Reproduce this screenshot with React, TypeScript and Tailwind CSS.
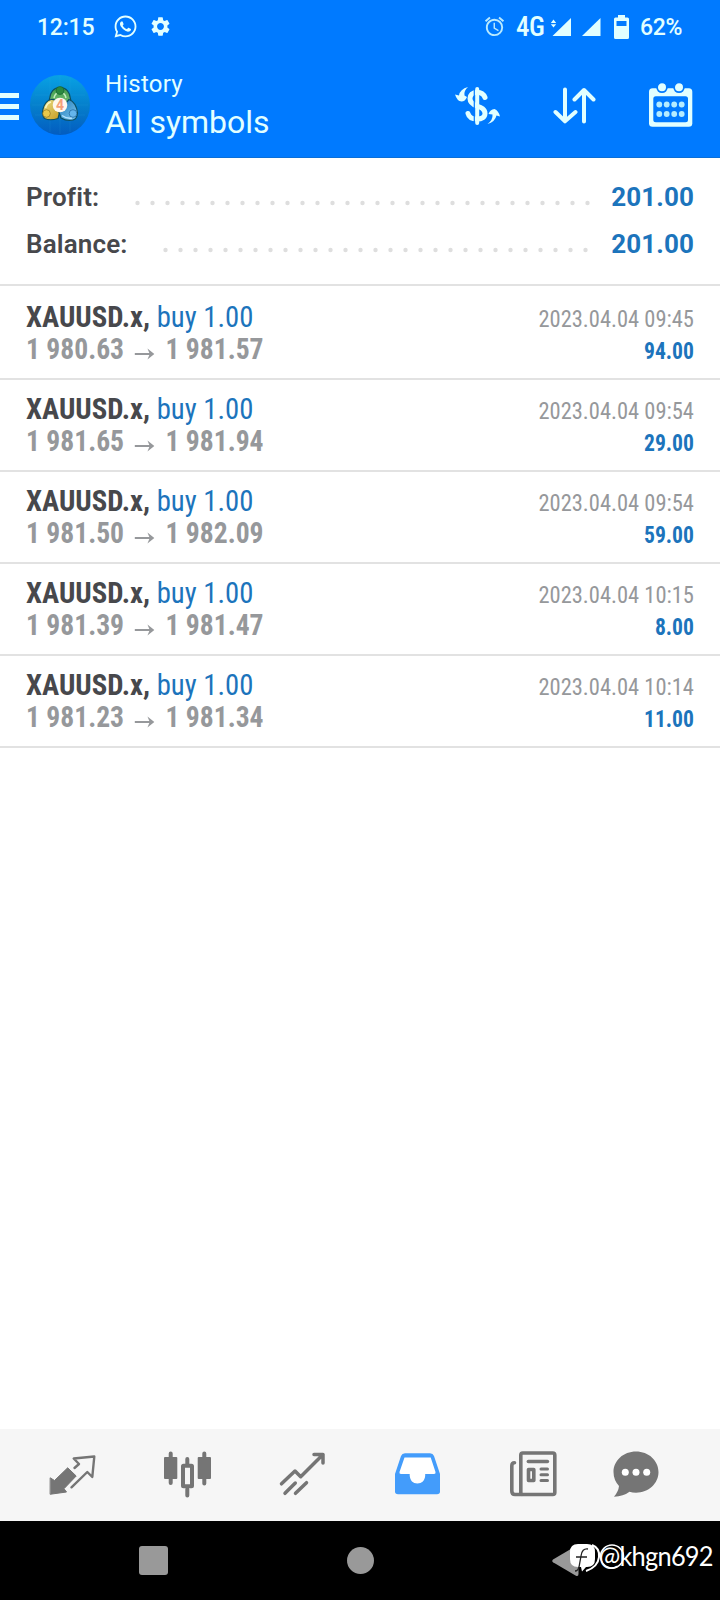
import type { ReactNode } from "react";
import { FaWhatsapp } from "react-icons/fa";
import { MdSettings, MdAlarm } from "react-icons/md";

const deals = [
  { open: "1 980.63", close: "1 981.57", time: "2023.04.04 09:45", profit: "94.00" },
  { open: "1 981.65", close: "1 981.94", time: "2023.04.04 09:54", profit: "29.00" },
  { open: "1 981.50", close: "1 982.09", time: "2023.04.04 09:54", profit: "59.00" },
  { open: "1 981.39", close: "1 981.47", time: "2023.04.04 10:15", profit: "8.00" },
  { open: "1 981.23", close: "1 981.34", time: "2023.04.04 10:14", profit: "11.00" },
];

function Icon({ className, children }: { className?: string; children: ReactNode }) {
  return (
    <svg viewBox="0 0 48 48" className={`size-12 shrink-0 ${className ?? ""}`} fill="none" strokeLinecap="round" strokeLinejoin="round">
      {children}
    </svg>
  );
}

function StatusBar() {
  return (
    <div className="flex h-[53px] items-center pl-[37px] text-[#e2ffff]">
      <span className="w-[76px] pt-px text-[23px] font-medium leading-none tracking-[-0.2px]">12:15</span>
      <FaWhatsapp className="size-[25px]" />
      <MdSettings className="ml-[11px] size-[23px]" />
      <MdAlarm className="ml-[311px] size-[23px] text-[#b9eaff]" />
      <span className="ml-[10px] w-[34px] whitespace-nowrap pt-[2px] font-['Roboto_Condensed',Roboto,sans-serif] text-[27px] font-medium leading-none tracking-[-0.5px] [font-stretch:75%]">4G</span>
      <svg width="22" height="20" viewBox="0 0 22 20" fill="currentColor">
        <path d="M21 1V19H2.5ZM3.5 2.5 6.2 6H.8ZM3.5 10.500.8 7.300h5.400Z" />
      </svg>
      <svg width="20" height="20" viewBox="0 0 20 20" fill="currentColor" className="ml-[9px]">
        <path d="M19.500 1V19H1Z" />
      </svg>
      <svg width="15" height="24" viewBox="0 0 15 24" className="ml-[13px]">
        <path fill="currentColor" fillRule="evenodd" d="M4 0h7v2.500h2.500Q15 2.500 15 4v18.500q0 1.500-1.500 1.500h-12Q0 24 0 22.500V4q0-1.500 1.500-1.500H4ZM2.500 6v5h10V6Z" />
      </svg>
      <span className="ml-[11px] pt-px text-[23px] font-medium leading-none tracking-[-0.3px]">62%</span>
    </div>
  );
}

function AppLogo() {
  return (
    <svg width="60" height="60" viewBox="0 0 60 60" className="ml-[11px] shrink-0">
      <defs>
        <linearGradient id="disc" x1="0" y1="0" x2="0" y2="1">
          <stop offset="0" stopColor="#08a2e4" />
          <stop offset="0.5" stopColor="#0580cc" />
          <stop offset="1" stopColor="#035cc0" />
        </linearGradient>
        <linearGradient id="green" x1="0" y1="0" x2="0" y2="1">
          <stop offset="0" stopColor="#3e9a4a" />
          <stop offset="1" stopColor="#7cc47c" />
        </linearGradient>
        <linearGradient id="gold" x1="0" y1="0" x2="1" y2="1">
          <stop offset="0" stopColor="#e9e08a" />
          <stop offset="1" stopColor="#c79a1c" />
        </linearGradient>
        <linearGradient id="azure" x1="0" y1="0" x2="1" y2="1">
          <stop offset="0" stopColor="#1c78b8" />
          <stop offset="1" stopColor="#7fc8f0" />
        </linearGradient>
      </defs>
      <circle cx="30" cy="30" r="30" fill="url(#disc)" />
      <path d="M5 20H55M2 30H58M5 40H55M20 3V57M30 1V59M40 3V57" stroke="#38b6e8" strokeWidth="0.5" opacity="0.25" />
      <g stroke="#0c4f63" strokeWidth="1.200">
        <path d="M30 12.500C36 12.500 40 17 40.500 24L42 30 30 31 18 30 19.500 24C20 17 24 12.500 30 12.500Z" fill="url(#green)" />
        <path d="M21 24.500C26 24 30 28 31 32L28 43.500Q20 46 14.500 43.500Q11.500 40 13 34Q15 26 21 24.500Z" fill="url(#gold)" />
        <path d="M39 24.500C44 26 47 32 47.500 38Q47 44 43 45Q37 46.500 31 43L28.500 36Q32 35 34 30Z" fill="url(#azure)" />
      </g>
      <path d="M24 23Q25 17.500 30 17.500T36 23" stroke="#c5eec0" strokeWidth="1.500" fill="none" />
      <path d="M15.500 33Q17 28 21 27" stroke="#fdf7c0" strokeWidth="1.500" fill="none" />
      <path d="M32 40.500Q37 44 42 43" stroke="#b4e4ff" strokeWidth="1.500" fill="none" />
      <circle cx="30" cy="15.500" r="4" fill="#2c8a40" stroke="#0f5a2e" strokeWidth="0.6" />
      <circle cx="16.500" cy="38.500" r="3.800" fill="#e8c84a" stroke="#846714" strokeWidth="0.6" />
      <circle cx="43" cy="38.500" r="3.800" fill="#64b5ec" stroke="#14578e" strokeWidth="0.6" />
      <circle cx="30" cy="30" r="7.300" fill="#fff8ee" />
      <text x="30" y="35" textAnchor="middle" fontSize="14" fontWeight="700" fill="#f5a078">4</text>
    </svg>
  );
}

function Header() {
  return (
    <header className="h-[158px] border-b border-[#0a6fd8] bg-[#007aff] text-[#e2ffff]">
      <StatusBar />
      <div className="flex h-[104px] items-center">
        <div className="flex w-[19px] flex-col gap-[6px] pt-[3px]">
          <div className="h-[5px] bg-current" />
          <div className="h-[5px] bg-current" />
          <div className="h-[5px] bg-current" />
        </div>
        <AppLogo />
        <div className="ml-[15px] flex w-[349px] flex-col">
          <span className="text-[24px] leading-[34px] tracking-[0.2px]">History</span>
          <span className="text-[32px] leading-[42px]">All symbols</span>
        </div>
        <Icon>
          <g stroke="currentColor">
            <path d="M23.200 8V42" strokeWidth="4" />
            <path d="M31 16.500C29.500 12.500 26 11.200 23 11.200C18.500 11.200 16 14 16 17.500C16 22 19 23.500 23 25C27.500 26.500 31 28 31 32.500C31 36 28 38 23 38C18 38 15 36.500 14 32.500" strokeWidth="5" />
          </g>
          <path d="M20.300 8V41" stroke="#007aff" strokeWidth="1.200" />
          <path d="M14 6Q9.500 10 10.500 14.500L13 16Q11 20.500 7.500 20.500Q3 20 1 13.500L5 14.500Q6 8 14 6Z" fill="currentColor" />
          <path d="M33.500 43Q39 39 38.500 33.500L34.500 33Q36 28.500 40.500 28Q44.500 29.500 46 35.500L42.500 34.500Q41 41 33.500 43Z" fill="currentColor" />
        </Icon>
        <Icon className="ml-[51px]">
          <path d="M12 8.500V40M2.500 31 12 40.300 22.500 31M31 40.500V9M21.500 18.500 31 9 40.500 18.500" stroke="currentColor" strokeWidth="4" />
        </Icon>
        <Icon className="ml-[47px]">
          <rect x="1" y="7.300" width="43.300" height="38.400" rx="3.500" fill="currentColor" />
          <rect x="5.300" y="15.300" width="34.700" height="26" rx="2.500" fill="#007aff" />
          <g fill="currentColor" stroke="#007aff" strokeWidth="1.800">
            <circle cx="14" cy="6.300" r="4.900" />
            <circle cx="31" cy="6.300" r="4.900" />
          </g>
          <g fill="#b4ecff">
            {[11.3, 18.7, 26.2, 33.7].map((x) => (
              <g key={x}>
                <circle cx={x} cy="23.500" r="2.900" />
                <circle cx={x} cy="33" r="2.900" />
              </g>
            ))}
          </g>
        </Icon>
      </div>
    </header>
  );
}

function SummaryRow({ label, value, dots, inset }: { label: string; value: string; dots: number; inset: number }) {
  const width = dots * 15 + inset;
  return (
    <div className="flex h-[47px] items-center">
      <span className="text-[26px] font-semibold leading-none tracking-[0.15px] text-[#47484c]">{label}</span>
      <svg width={width} height="6" viewBox={`0 0 ${width} 6`} className="ml-auto mt-[12px]" fill="#dedede">
        {Array.from({ length: dots }, (_, i) => (
          <circle key={i} cx={i * 15 + 7.5} cy="3" r="2.200" />
        ))}
      </svg>
      <span className="w-[99px] text-right text-[26px] font-bold leading-none tracking-[0.1px] text-[#1c74bc]">{value}</span>
    </div>
  );
}

function DealRow({ deal }: { deal: (typeof deals)[number] }) {
  return (
    <li className="flex h-[92px] justify-between border-b-2 border-[#e2e2e2] px-[26px] pt-[13px] font-['Roboto_Condensed',Roboto,sans-serif] [font-stretch:75%] first:h-[94px] first:pt-[15px]">
      <div className="flex flex-col whitespace-nowrap text-[30px] leading-[32px]">
        <div className="origin-left scale-x-[0.957] text-[#1c74bc]">
          <span className="font-bold text-[#47484c]">XAUUSD.x,</span> buy 1.00
        </div>
        <div className="flex origin-left scale-x-[0.92] items-center font-bold text-[#96989b]">
          <span>{deal.open}</span>
          <svg width="22" height="12" viewBox="0 0 22 12" className="ml-[11px] mr-[12px] mt-[10px]" fill="none" stroke="currentColor" strokeWidth="1.800">
            <path d="M0 6H18" />
            <path d="M14 0.500 21.500 6 14 11.500 16.500 6Z" fill="currentColor" stroke="none" />
          </svg>
          <span>{deal.close}</span>
        </div>
      </div>
      <div className="flex flex-col pt-[2px] text-right text-[24px] leading-[32px]">
        <span className="origin-right scale-x-[0.937] text-[#96989b]">{deal.time}</span>
        <span className="origin-right scale-x-[0.9] font-bold text-[#1c74bc]">{deal.profit}</span>
      </div>
    </li>
  );
}

function TabBar() {
  return (
    <nav className="flex h-[92px] items-center bg-[#f6f6f6] pb-[2px] pl-[48px] text-[#757575]">
      <Icon>
        <path d="M2.500 28 6.500 30.500 19.700 17.800 28.200 26 16 38.700 18.500 42 2.500 44.200Z" fill="currentColor" stroke="currentColor" strokeWidth="1" />
        <path d="M26.500 18 31 14 25.700 8.500 46.300 6.500 44.300 27 39.300 22 23.500 37.300" stroke="currentColor" strokeWidth="2.400" />
      </Icon>
      <Icon className="ml-[67px]">
        <g stroke="currentColor" strokeWidth="4">
          <path d="M7.700 3.500V33M41.300 3.500V33.500M24.300 9V14M24.300 39V45.500" />
          <rect x="20" y="15.700" width="9" height="20.500" rx="0.5" />
        </g>
        <rect x="1" y="7" width="13.300" height="22" rx="1" fill="currentColor" />
        <rect x="34.700" y="7" width="13.300" height="22" rx="1" fill="currentColor" />
      </Icon>
      <Icon className="ml-[68px]">
        <path d="M2.500 33.800 16 21 21.700 26.700 44 4.500M35 4.500H44V13M6 43.300 16.300 33M16.500 43.300 27.500 32.700" stroke="currentColor" strokeWidth="3.500" />
      </Icon>
      <Icon className="ml-[67px] text-[#439cfb]">
        <path fill="currentColor" d="M1 24 7 6Q8 3.300 11 3.300H36Q39 3.300 40 6L46 24V41.500Q46 44.300 43 44.300H4Q1 44.300 1 41.500Z" />
        <path fill="#ffffff" d="M10.500 7.500 5.500 22Q5 24 7 24H15.700V25.500C16 30.500 19 33.500 23.400 33.500S31 30.500 31.200 25.500V24H40Q42 24 41.500 22L36.700 7.500Z" />
      </Icon>
      <Icon className="ml-[67px]">
        <g stroke="currentColor" strokeWidth="3.600">
          <rect x="11.800" y="3" width="34" height="41.500" rx="2" />
          <path d="M5.500 12.800Q2.800 12.800 2.800 16V41Q2.800 44.500 6 44.500H13" />
          <path d="M19.300 11.500H38.500" strokeWidth="3.400" />
          <path d="M32 19H38.500M32 24.700H38.500M32 30.400H38.500" strokeWidth="3" />
          <rect x="19.500" y="19.500" width="5.300" height="11" />
        </g>
      </Icon>
      <Icon className="ml-[55px]">
        <path d="M24 1.500C36.500 1.500 46.500 10.500 46.500 22S36.500 42.700 24 42.700Q20.500 42.700 17.500 41.800Q11.500 46.500 2 46.700Q6.500 41.500 7 36Q1.500 30 1.500 22C1.500 10.500 11.500 1.500 24 1.500Z" fill="currentColor" />
        <g fill="#ffffff">
          <circle cx="13.300" cy="22.300" r="3.500" />
          <circle cx="24" cy="22.300" r="3.500" />
          <circle cx="34.700" cy="22.300" r="3.500" />
        </g>
      </Icon>
    </nav>
  );
}

function SystemNav() {
  return (
    <div className="relative flex h-[79px] items-center bg-black pl-[139px]">
      <div className="size-[29px] rounded-[3px] bg-[#999999]" />
      <div className="ml-[179px] size-[27px] rounded-full bg-[#999999]" />
      <svg width="28" height="32" viewBox="0 0 28 32" className="ml-[178px]" fill="#999999">
        <path d="M1 14.500 23.500 1.200Q26.500 0 26.500 3V29Q26.500 32 23.500 30.500L1 17.300Q-.500 16 1 14.500Z" />
      </svg>
      <div className="absolute left-[570px] top-[22px] flex h-[32px] items-start text-white">
        <svg width="60" height="32" viewBox="0 0 60 32" className="-mr-[31px] shrink-0" fill="none">
          <path d="M8 1H17Q25 1 25 9V16Q25 24 17 24H16L12 28.500 11 24H8Q0 24 0 16V9Q0 1 8 1Z" fill="#ffffff" />
          <path d="M18 6Q12 5 11 13L9 24Q8 28 5 28M6 14H17" stroke="#222222" strokeWidth="1.300" />
          <path d="M22 2Q30 5 29 14Q28 24 16 28" stroke="#ffffff" strokeWidth="2" />
          <circle cx="42" cy="13.500" r="11.500" stroke="#ffffff" strokeWidth="1.500" />
        </svg>
        <span className="origin-left scale-x-[0.94] whitespace-nowrap font-['Lato',sans-serif] text-[27px] leading-[26px] tracking-[-0.8px]">@khgn692</span>
      </div>
    </div>
  );
}

export default function App() {
  return (
    <div className="flex h-[1600px] w-[720px] flex-col overflow-hidden bg-white font-['Roboto',sans-serif]">
      <Header />
      <section className="h-[128px] border-b-2 border-[#e2e2e2] px-[26px] pt-[15px]">
        <SummaryRow label="Profit:" value="201.00" dots={31} inset={0} />
        <SummaryRow label="Balance:" value="201.00" dots={29} inset={2} />
      </section>
      <ul>
        {deals.map((deal) => (
          <DealRow key={deal.open} deal={deal} />
        ))}
      </ul>
      <div className="flex-1" />
      <TabBar />
      <SystemNav />
    </div>
  );
}
